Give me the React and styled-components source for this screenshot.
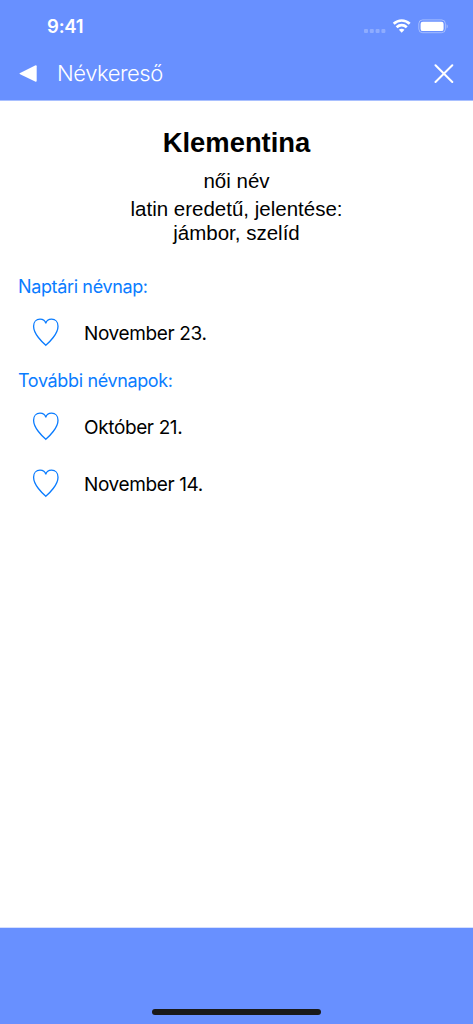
import React from 'react';
import styled, { createGlobalStyle } from 'styled-components';

const GlobalStyle = createGlobalStyle`
  body {
    margin: 0;
    background: #ffffff;
  }
  * {
    box-sizing: border-box;
  }
`;

const Screen = styled.div`
  width: 473px;
  height: 1024px;
  display: flex;
  flex-direction: column;
  overflow: hidden;
  background: #ffffff;
  color: #000000;
  font-family: Inter, 'Liberation Sans', sans-serif;
`;

const Header = styled.header`
  height: 101px;
  flex-shrink: 0;
  background: #6890ff;
  border-bottom: 1px solid #a9c0ff;
  color: #ffffff;
`;

const StatusBar = styled.div`
  height: 52px;
  padding: 0 25px 0 47px;
  display: flex;
  align-items: center;
  justify-content: space-between;
`;

const Clock = styled.div`
  font-size: 18.5px;
  font-weight: 600;
  line-height: 24px;
  letter-spacing: -0.2px;
`;

const StatusIcons = styled.svg`
  display: block;
  width: 84px;
  height: 16px;
`;

const NavBar = styled.nav`
  height: 42px;
  padding: 0 19px 0 19px;
  display: flex;
  align-items: center;
`;

const NavTitle = styled.div`
  flex: 1;
  margin-left: 18px;
  font-size: 22px;
  font-weight: 350;
  line-height: 28px;
  letter-spacing: -0.45px;
`;

const NavIcon = styled.svg`
  display: block;
  width: 20px;
  height: 20px;
`;

const Content = styled.main`
  flex: 1;
  padding-top: 25px;
`;

const Intro = styled.section`
  font-family: 'Liberation Sans', Arial, sans-serif;
  text-align: center;
`;

const Name = styled.h1`
  margin: 0;
  font-size: 27.4px;
  font-weight: 700;
  line-height: 34px;
`;

const Gender = styled.p`
  margin: 9px 0 0;
  font-size: 20.5px;
  line-height: 24px;
`;

const Meaning = styled.p`
  margin: 4px 0 0;
  font-size: 20.5px;
  line-height: 24px;
`;

const SectionTitle = styled.h2`
  margin: ${({ $top }) => $top}px 0 4px 18px;
  font-size: 18px;
  font-weight: 400;
  line-height: 24px;
  letter-spacing: -0.36px;
  color: #0a7cff;
`;

const DayRow = styled.div`
  height: 57px;
  padding-left: 32px;
  display: flex;
  align-items: center;
`;

const DayText = styled.span`
  margin-left: 24px;
  padding-top: 4px;
  font-size: 19px;
  line-height: 24px;
  letter-spacing: -0.37px;
`;

const HeartIcon = styled.svg`
  display: block;
  width: 28px;
  height: 30px;
`;

const Footer = styled.footer`
  height: 97px;
  flex-shrink: 0;
  padding-bottom: 9px;
  display: flex;
  align-items: flex-end;
  justify-content: center;
  background: #6890ff;
  border-top: 1px solid #d5dfff;
`;

const HomeIndicator = styled.div`
  width: 169px;
  height: 6px;
  border-radius: 3px;
  background: #191919;
`;

const Heart = () => (
  <HeartIcon viewBox="0 0 28 30" fill="none" stroke="#0a7cff" strokeWidth="1.3">
    <path d="M13.8 6.4C13.2 3.8 10.8 2.2 8 2.2C4.2 2.2 1.6 5 1.6 9.2C1.6 13.4 3.6 16.9 6.4 20.5C8.8 23.6 11.4 26.2 13.8 28.3C16.2 26.2 18.8 23.6 21.2 20.5C24 16.9 26 13.4 26 9.2C26 5 23.4 2.2 19.6 2.2C16.8 2.2 14.4 3.8 13.8 6.4Z" />
  </HeartIcon>
);

const Day = ({ children }) => (
  <DayRow>
    <Heart />
    <DayText>{children}</DayText>
  </DayRow>
);

const App = () => {
  return (
    <>
      <GlobalStyle />
      <Screen>
        <Header>
          <StatusBar>
            <Clock>9:41</Clock>
            <StatusIcons viewBox="0 0 84 16" fill="#ffffff">
              <g opacity="0.25">
                <rect x="0" y="11" width="4" height="4" rx="1" />
                <rect x="5.8" y="11" width="4" height="4" rx="1" />
                <rect x="11.6" y="11" width="4" height="4" rx="1" />
                <rect x="17.4" y="11" width="4" height="4" rx="1" />
              </g>
              <g fill="none" stroke="#ffffff" strokeWidth="2.7">
                <path d="M29.7 5.7C34.4 1.4 41 1.4 45.7 5.7" />
                <path d="M32.6 9.3C35.7 6.5 39.7 6.5 42.8 9.3" />
              </g>
              <path d="M34.9 11.8C36.6 10.4 38.8 10.4 40.5 11.8L37.7 14.7Z" />
              <rect x="54.8" y="1.9" width="26.6" height="12.8" rx="3.8" fill="none" stroke="#ffffff" strokeOpacity="0.4" />
              <rect x="56.6" y="3.7" width="23" height="9.4" rx="2.2" />
              <path d="M82.7 6.2V10.6C83.9 10 83.9 6.8 82.7 6.2Z" opacity="0.5" />
            </StatusIcons>
          </StatusBar>
          <NavBar>
            <NavIcon viewBox="0 0 20 20" fill="#ffffff">
              <path d="M1.1 9.9L16.1 2.4Q17.7 1.9 17.7 3.3V17.7Q17.7 19.1 16.1 18.5L1.1 11.3Q-0.2 10.6 1.1 9.9Z" />
            </NavIcon>
            <NavTitle>Névkereső</NavTitle>
            <NavIcon viewBox="0 0 20 20" fill="none" stroke="#ffffff" strokeWidth="2" strokeLinecap="round">
              <path d="M1.5 2.2L18.3 19M18.3 2.2L1.5 19" />
            </NavIcon>
          </NavBar>
        </Header>
        <Content>
          <Intro>
            <Name>Klementina</Name>
            <Gender>női név</Gender>
            <Meaning>
              latin eredetű, jelentése:
              <br />
              jámbor, szelíd
            </Meaning>
          </Intro>
          <SectionTitle $top={30}>Naptári névnap:</SectionTitle>
          <Day>November 23.</Day>
          <SectionTitle $top={9}>További névnapok:</SectionTitle>
          <Day>Október 21.</Day>
          <Day>November 14.</Day>
        </Content>
        <Footer>
          <HomeIndicator />
        </Footer>
      </Screen>
    </>
  );
};

export default App;
